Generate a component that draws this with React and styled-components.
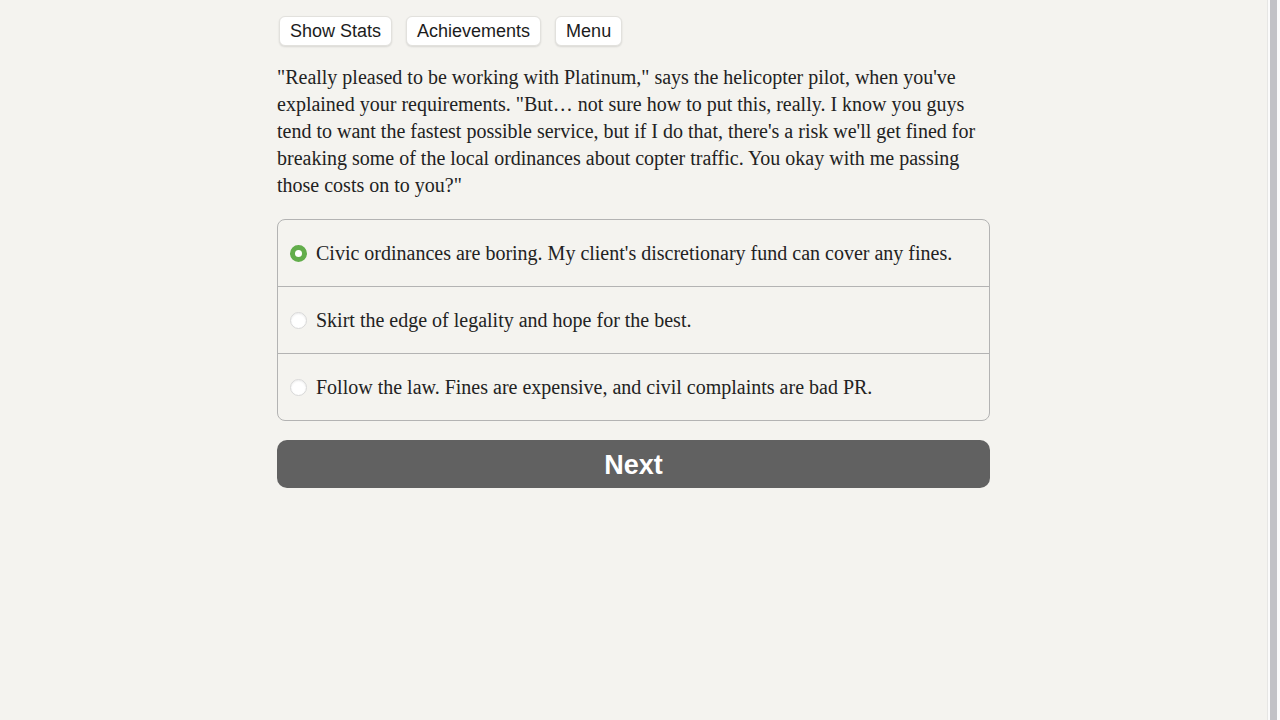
import React, { useState } from 'react';
import styled, { createGlobalStyle } from 'styled-components';

const GlobalStyle = createGlobalStyle`
    body {
        margin: 0;
        background-color: #f4f3ef;
        color: #222;
        overflow: hidden;
    }
`;

const Shell = styled.div`
    display: flex;
    height: 100vh;
`;

const Main = styled.main`
    flex: 1;
    padding-top: 16px;
`;

// a static drawing of the window's scroll rail on the right edge
const ScrollRail = styled.div`
    flex: none;
    width: 13px;
    background: linear-gradient(to right, #e6e6e4 0 1px, #fbfbfb 1px 3px, #c2c2c6 3px 10px, #fbfbfb 10px);
`;

const Column = styled.div`
    width: 713px;
    margin: 0 auto;
`;

const Toolbar = styled.div`
    display: flex;
    gap: 14px;
    padding-left: 2px;
`;

const ToolButton = styled.button`
    font-family: "Liberation Sans", Arial, sans-serif;
    font-size: 18px;
    color: #1c1c1c;
    height: 30px;
    padding: 0 10px;
    background-color: #fff;
    border: 1px solid #e2e1dd;
    border-radius: 6px;
    box-shadow: 0 1px 2px rgba(0, 0, 0, 0.12);
    cursor: pointer;
`;

const Story = styled.p`
    font-family: "Liberation Serif", "Times New Roman", serif;
    font-size: 20px;
    line-height: 27px;
    margin: 18px 0 20px;
`;

const Choices = styled.div`
    border: 1px solid #b3b3b3;
    border-radius: 8px;
    overflow: hidden;
`;

const Choice = styled.label`
    display: flex;
    align-items: center;
    gap: 9px;
    height: 66px;
    padding: 0 12px;
    font-family: "Liberation Serif", "Times New Roman", serif;
    font-size: 20px;
    cursor: pointer;

    & + & {
        border-top: 1px solid #b3b3b3;
    }
`;

const Radio = styled.span`
    flex: none;
    box-sizing: border-box;
    width: 17px;
    height: 17px;
    border-radius: 50%;
    background-color: #fff;
    border: ${p => (p.checked ? '5px solid #62ad4b' : '1px solid #d8d8d8')};
    box-shadow: ${p => (p.checked ? 'none' : 'inset 0 1px 2px rgba(0, 0, 0, 0.08)')};
`;

const NextButton = styled.button`
    display: block;
    width: 100%;
    height: 48px;
    margin-top: 19px;
    padding-top: 3px;
    border: none;
    border-radius: 10px;
    background-color: #616161;
    color: #fff;
    font-family: "Liberation Sans", Arial, sans-serif;
    font-weight: bold;
    font-size: 27px;
    cursor: pointer;
`;

const options = [
    "Civic ordinances are boring. My client's discretionary fund can cover any fines.",
    'Skirt the edge of legality and hope for the best.',
    'Follow the law. Fines are expensive, and civil complaints are bad PR.',
];

const App = () => {
    const [selected, setSelected] = useState(0);

    return (
        <Shell>
            <GlobalStyle />
            <Main>
                <Column>
                    <Toolbar>
                        <ToolButton>Show Stats</ToolButton>
                        <ToolButton>Achievements</ToolButton>
                        <ToolButton>Menu</ToolButton>
                    </Toolbar>
                    <Story>
                        "Really pleased to be working with Platinum," says the helicopter pilot, when you've
                        explained your requirements. "But… not sure how to put this, really. I know you guys
                        tend to want the fastest possible service, but if I do that, there's a risk we'll get
                        fined for breaking some of the local ordinances about copter traffic. You okay with me
                        passing those costs on to you?"
                    </Story>
                    <Choices>
                        {options.map((text, i) => (
                            <Choice key={i} onClick={() => setSelected(i)}>
                                <Radio checked={selected === i} />
                                {text}
                            </Choice>
                        ))}
                    </Choices>
                    <NextButton>Next</NextButton>
                </Column>
            </Main>
            <ScrollRail />
        </Shell>
    );
};

export default App;
